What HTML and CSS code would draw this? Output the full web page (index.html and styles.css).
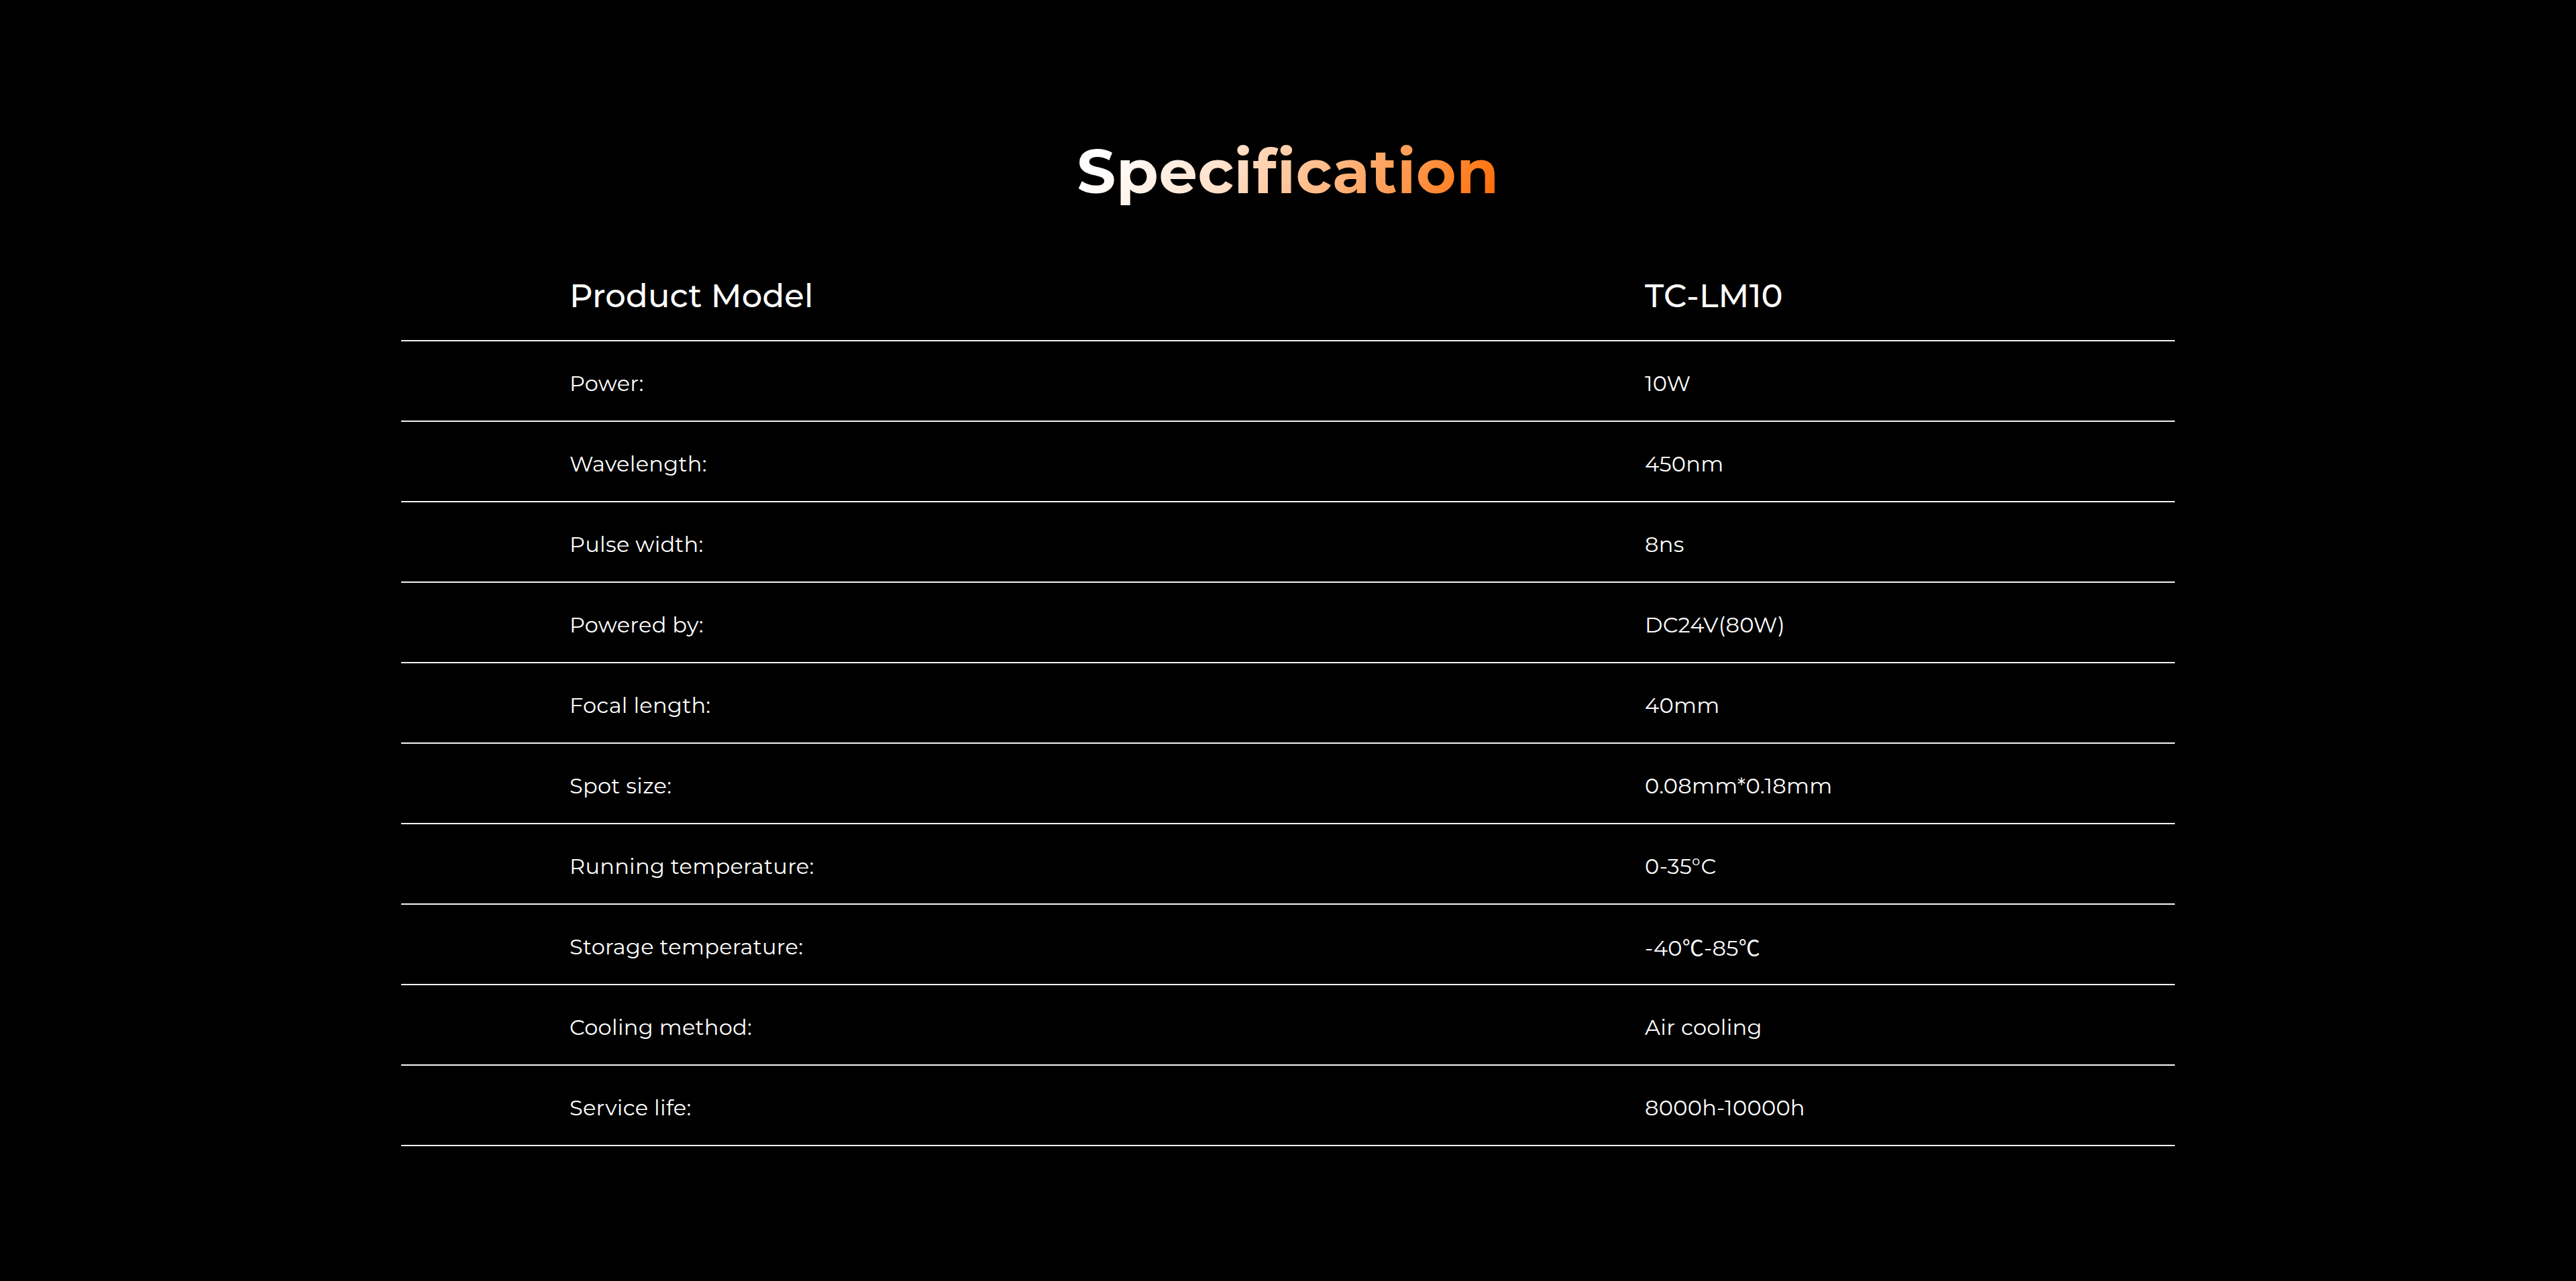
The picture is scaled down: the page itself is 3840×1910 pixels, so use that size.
FILE: index.html
```html
<!DOCTYPE html>
<html lang="en">
<head>
<meta charset="utf-8">
<title>Specification</title>
<link rel="stylesheet" href="styles.css">
</head>
<body>
<section class="spec">
  <h1 class="spec-title">Specification</h1>
  <div class="spec-table">
    <div class="spec-row spec-head">
      <div class="spec-label">Product Model</div>
      <div class="spec-value">TC-LM10</div>
    </div>
    <div class="spec-row"><div class="spec-label">Power:</div><div class="spec-value">10W</div></div>
    <div class="spec-row"><div class="spec-label">Wavelength:</div><div class="spec-value">450nm</div></div>
    <div class="spec-row"><div class="spec-label">Pulse width:</div><div class="spec-value">8ns</div></div>
    <div class="spec-row"><div class="spec-label">Powered by:</div><div class="spec-value">DC24V(80W)</div></div>
    <div class="spec-row"><div class="spec-label">Focal length:</div><div class="spec-value">40mm</div></div>
    <div class="spec-row"><div class="spec-label">Spot size:</div><div class="spec-value">0.08mm*0.18mm</div></div>
    <div class="spec-row"><div class="spec-label">Running temperature:</div><div class="spec-value">0-35°C</div></div>
    <div class="spec-row"><div class="spec-label">Storage temperature:</div><div class="spec-value">-40℃-85℃</div></div>
    <div class="spec-row"><div class="spec-label">Cooling method:</div><div class="spec-value">Air cooling</div></div>
    <div class="spec-row"><div class="spec-label">Service life:</div><div class="spec-value">8000h-10000h</div></div>
  </div>
</section>
</body>
</html>
```

FILE: styles.css
```css
html, body {
  margin: 0;
  padding: 0;
  background: #000;
}
body {
  font-family: Montserrat, "Noto Sans CJK SC", Inter, sans-serif;
  color: #fff;
  min-height: 1910px;
}
.spec {
  padding-top: 206px;
}
.spec-title {
  margin: 0 auto;
  width: max-content;
  text-align: center;
  font-size: 91px;
  line-height: 100px;
  font-weight: 700;
  letter-spacing: 0.6px;
  background: linear-gradient(118deg, #ffffff 8%, #ffe2cc 35%, #ffb47c 62%, #ff6a00 100%);
  -webkit-background-clip: text;
  background-clip: text;
  color: transparent;
}
.spec-table {
  width: 2644px;
  margin: 83px auto 0;
}
.spec-row {
  display: flex;
  align-items: center;
  height: 120px;
  box-sizing: border-box;
  border-bottom: 2px solid #f4f4f4;
  padding-left: 251px;
  padding-top: 6px;
  font-size: 32px;
  font-weight: 400;
  letter-spacing: 0.3px;
}
.spec-label {
  width: 1603px;
  flex: none;
}
.spec-head {
  padding-top: 0;
  padding-bottom: 14px;
  font-size: 48px;
  font-weight: 500;
  letter-spacing: 0.2px;
}
```
